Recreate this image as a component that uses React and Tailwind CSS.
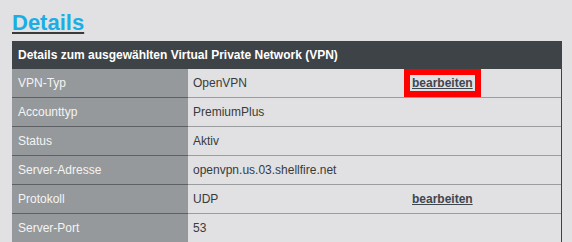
const rows = [
  { label: "VPN-Typ", value: "OpenVPN", action: "bearbeiten", highlight: true },
  { label: "Accounttyp", value: "PremiumPlus" },
  { label: "Status", value: "Aktiv" },
  { label: "Server-Adresse", value: "openvpn.us.03.shellfire.net" },
  { label: "Protokoll", value: "UDP", action: "bearbeiten" },
  { label: "Server-Port", value: "53" },
];

const App = () => {
  return (
    <div className="w-[572px] h-[242px] overflow-hidden bg-[#e1e1e3] pl-[12px] pr-[10px] pt-[10px] font-['Liberation_Sans',Arial,sans-serif]">
      <h1 className="text-[22px] leading-[26px] font-bold text-[#1aaee5] underline decoration-[#3a3a3a] underline-offset-[2px] mb-[5px]">
        Details
      </h1>

      {/* Table */}
      <div className="w-[550px]">
        <div className="h-[28px] bg-[#3e4347] text-white text-[12px] font-bold flex items-center pl-[6px]">
          Details zum ausgewählten Virtual Private Network (VPN)
        </div>

        {rows.map((row) => (
          <div key={row.label} className="flex h-[29px] border-r border-[#3e4347] text-[12px]">
            <div className="w-[176px] bg-[#95999b] text-[#f4f4f4] border-b border-[#5d6163] flex items-center pl-[6px]">
              {row.label}
            </div>
            <div className="w-[216px] text-[#3a3a3a] border-b border-[#9a9c9e] flex items-center pl-[5px]">
              {row.value}
            </div>
            <div className="flex-1 border-b border-[#9a9c9e] flex items-center">
              {row.action && (
                <span
                  className={
                    row.highlight
                      ? "border-[6px] border-[#ff0000] px-[2px] h-[28px] flex items-center"
                      : "border-[6px] border-transparent px-[2px] h-[28px] flex items-center"
                  }
                >
                  <a href="#" className="font-bold text-[#3f4650] underline">
                    {row.action}
                  </a>
                </span>
              )}
            </div>
          </div>
        ))}
      </div>
    </div>
  );
};

export default App;
